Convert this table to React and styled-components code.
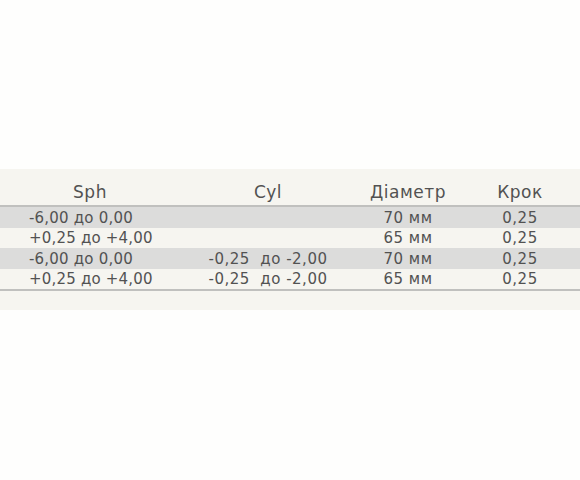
import React from "react";
import styled, { createGlobalStyle } from "styled-components";

const Global = createGlobalStyle`
  html, body { margin: 0; padding: 0; background: #ffffff; }
  body { font-family: "DejaVu Sans", "Liberation Sans", sans-serif; }
`;

const Page = styled.div`
  width: 580px;
  height: 480px;
  padding-top: 169px;
  box-sizing: border-box;
  background: #fefefd;
`;

const Panel = styled.div`
  background: #f6f5f0;
  padding-bottom: 19px;
`;

const cols = "180px 176px 104px 120px";

const HeadRow = styled.div`
  display: grid;
  grid-template-columns: ${cols};
  border-bottom: 2px solid #c0c0be;
  box-sizing: border-box;
  height: 38px;
`;

const HeadCell = styled.div`
  display: flex;
  align-items: center;
  justify-content: center;
  padding-top: 10px;
  box-sizing: border-box;
  font-size: 17px;
  letter-spacing: 0.5px;
  color: #525252;
`;

const Body = styled.div`
  border-bottom: 2px solid #c0c0be;
`;

const Row = styled.div`
  display: grid;
  grid-template-columns: ${cols};
  height: 20.5px;
  background: ${(p) => (p.$shade ? "#dcdcdb" : "#f6f5f0")};
`;

const Cell = styled.div`
  display: flex;
  align-items: center;
  justify-content: ${(p) => (p.$left ? "flex-start" : "center")};
  padding-left: ${(p) => (p.$left ? "29px" : "0")};
  padding-top: 2px;
  box-sizing: border-box;
  font-size: 15px;
  letter-spacing: ${(p) => (p.$left ? "0.2px" : "0.5px")};
  color: #525252;
  white-space: pre;
  line-height: 1;
`;

const rows = [
  ["-6,00 до 0,00", "", "70 мм", "0,25"],
  ["+0,25 до +4,00", "", "65 мм", "0,25"],
  ["-6,00 до 0,00", "-0,25  до -2,00", "70 мм", "0,25"],
  ["+0,25 до +4,00", "-0,25  до -2,00", "65 мм", "0,25"],
];

export default function App() {
  return (
    <Page>
      <Global />
      <Panel>
        <HeadRow>
          <HeadCell>Sph</HeadCell>
          <HeadCell>Cyl</HeadCell>
          <HeadCell>Діаметр</HeadCell>
          <HeadCell>Крок</HeadCell>
        </HeadRow>
        <Body>
          {rows.map((r, i) => (
            <Row key={i} $shade={i % 2 === 0}>
              <Cell $left>{r[0]}</Cell>
              <Cell>{r[1]}</Cell>
              <Cell>{r[2]}</Cell>
              <Cell>{r[3]}</Cell>
            </Row>
          ))}
        </Body>
      </Panel>
    </Page>
  );
}
